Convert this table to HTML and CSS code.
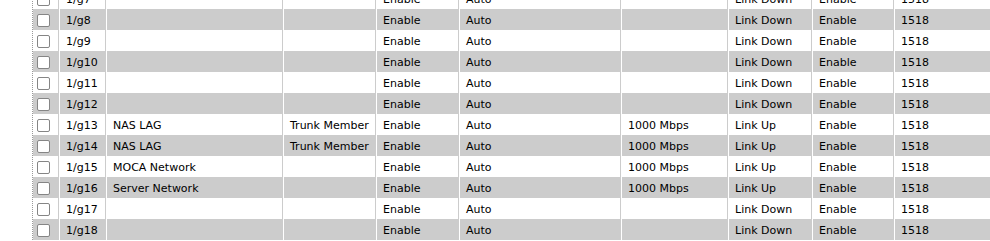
FILE: index.html
```html
<!DOCTYPE html>
<html lang="en">
<head>
<meta charset="utf-8">
<title>Port Configuration</title>
<link rel="stylesheet" href="styles.css">
</head>
<body>
<div class="frame">
<table class="ports">
<colgroup>
<col class="c-sel"><col class="c-port"><col class="c-desc"><col class="c-type"><col class="c-admin"><col class="c-mode"><col class="c-speed"><col class="c-link"><col class="c-trap"><col class="c-mtu">
</colgroup>
<tbody>
<tr><td class="sel"><input type="checkbox" class="chk"></td><td>1/g7</td><td></td><td></td><td>Enable</td><td>Auto</td><td></td><td>Link Down</td><td>Enable</td><td>1518</td></tr>
<tr><td class="sel"><input type="checkbox" class="chk"></td><td>1/g8</td><td></td><td></td><td>Enable</td><td>Auto</td><td></td><td>Link Down</td><td>Enable</td><td>1518</td></tr>
<tr><td class="sel"><input type="checkbox" class="chk"></td><td>1/g9</td><td></td><td></td><td>Enable</td><td>Auto</td><td></td><td>Link Down</td><td>Enable</td><td>1518</td></tr>
<tr><td class="sel"><input type="checkbox" class="chk"></td><td>1/g10</td><td></td><td></td><td>Enable</td><td>Auto</td><td></td><td>Link Down</td><td>Enable</td><td>1518</td></tr>
<tr><td class="sel"><input type="checkbox" class="chk"></td><td>1/g11</td><td></td><td></td><td>Enable</td><td>Auto</td><td></td><td>Link Down</td><td>Enable</td><td>1518</td></tr>
<tr><td class="sel"><input type="checkbox" class="chk"></td><td>1/g12</td><td></td><td></td><td>Enable</td><td>Auto</td><td></td><td>Link Down</td><td>Enable</td><td>1518</td></tr>
<tr><td class="sel"><input type="checkbox" class="chk"></td><td>1/g13</td><td>NAS LAG</td><td>Trunk Member</td><td>Enable</td><td>Auto</td><td>1000 Mbps</td><td>Link Up</td><td>Enable</td><td>1518</td></tr>
<tr><td class="sel"><input type="checkbox" class="chk"></td><td>1/g14</td><td>NAS LAG</td><td>Trunk Member</td><td>Enable</td><td>Auto</td><td>1000 Mbps</td><td>Link Up</td><td>Enable</td><td>1518</td></tr>
<tr><td class="sel"><input type="checkbox" class="chk"></td><td>1/g15</td><td>MOCA Network</td><td></td><td>Enable</td><td>Auto</td><td>1000 Mbps</td><td>Link Up</td><td>Enable</td><td>1518</td></tr>
<tr><td class="sel"><input type="checkbox" class="chk"></td><td>1/g16</td><td>Server Network</td><td></td><td>Enable</td><td>Auto</td><td>1000 Mbps</td><td>Link Up</td><td>Enable</td><td>1518</td></tr>
<tr><td class="sel"><input type="checkbox" class="chk"></td><td>1/g17</td><td></td><td></td><td>Enable</td><td>Auto</td><td></td><td>Link Down</td><td>Enable</td><td>1518</td></tr>
<tr><td class="sel"><input type="checkbox" class="chk"></td><td>1/g18</td><td></td><td></td><td>Enable</td><td>Auto</td><td></td><td>Link Down</td><td>Enable</td><td>1518</td></tr>
</tbody>
</table>
</div>
</body>
</html>
```

FILE: styles.css
```css
html, body {
  margin: 0;
  padding: 0;
  background: #fff;
  overflow: hidden;
}

.frame {
  margin-left: 32px;
  margin-top: -12px;
  border-left: 1px dotted #999;
  width: 957px;
}

.ports {
  table-layout: fixed;
  border-collapse: separate;
  border-spacing: 0;
  width: 957px;
  font-family: "DejaVu Sans", Verdana, sans-serif;
  font-size: 11px;
  color: #000;
}

.c-sel { width: 26px; }
.c-port { width: 47px; }
.c-desc { width: 177px; }
.c-type { width: 93px; }
.c-admin { width: 83px; }
.c-mode { width: 162px; }
.c-speed { width: 107px; }
.c-link { width: 84px; }
.c-trap { width: 82px; }
.c-mtu { width: 96px; }

.ports td {
  height: 21px;
  box-sizing: border-box;
  padding: 3px 0 0 6px;
  line-height: 18px;
  border-left: 1px solid #fff;
  border-right: 1px solid #ccc;
  white-space: nowrap;
  overflow: hidden;
  vertical-align: top;
}

.ports td:last-child {
  border-right: 0;
}

.ports tr:nth-child(even) td {
  background: #ccc;
}

.ports td.sel {
  padding: 0 0 0 4px;
  border-left: 0;
  vertical-align: middle;
  line-height: 0;
}

.chk {
  appearance: none;
  -webkit-appearance: none;
  display: inline-block;
  width: 13px;
  height: 13px;
  margin: 1px 0 0 0;
  box-sizing: border-box;
  border: 1px solid #858585;
  border-radius: 2px;
  background: #fff;
}
```
